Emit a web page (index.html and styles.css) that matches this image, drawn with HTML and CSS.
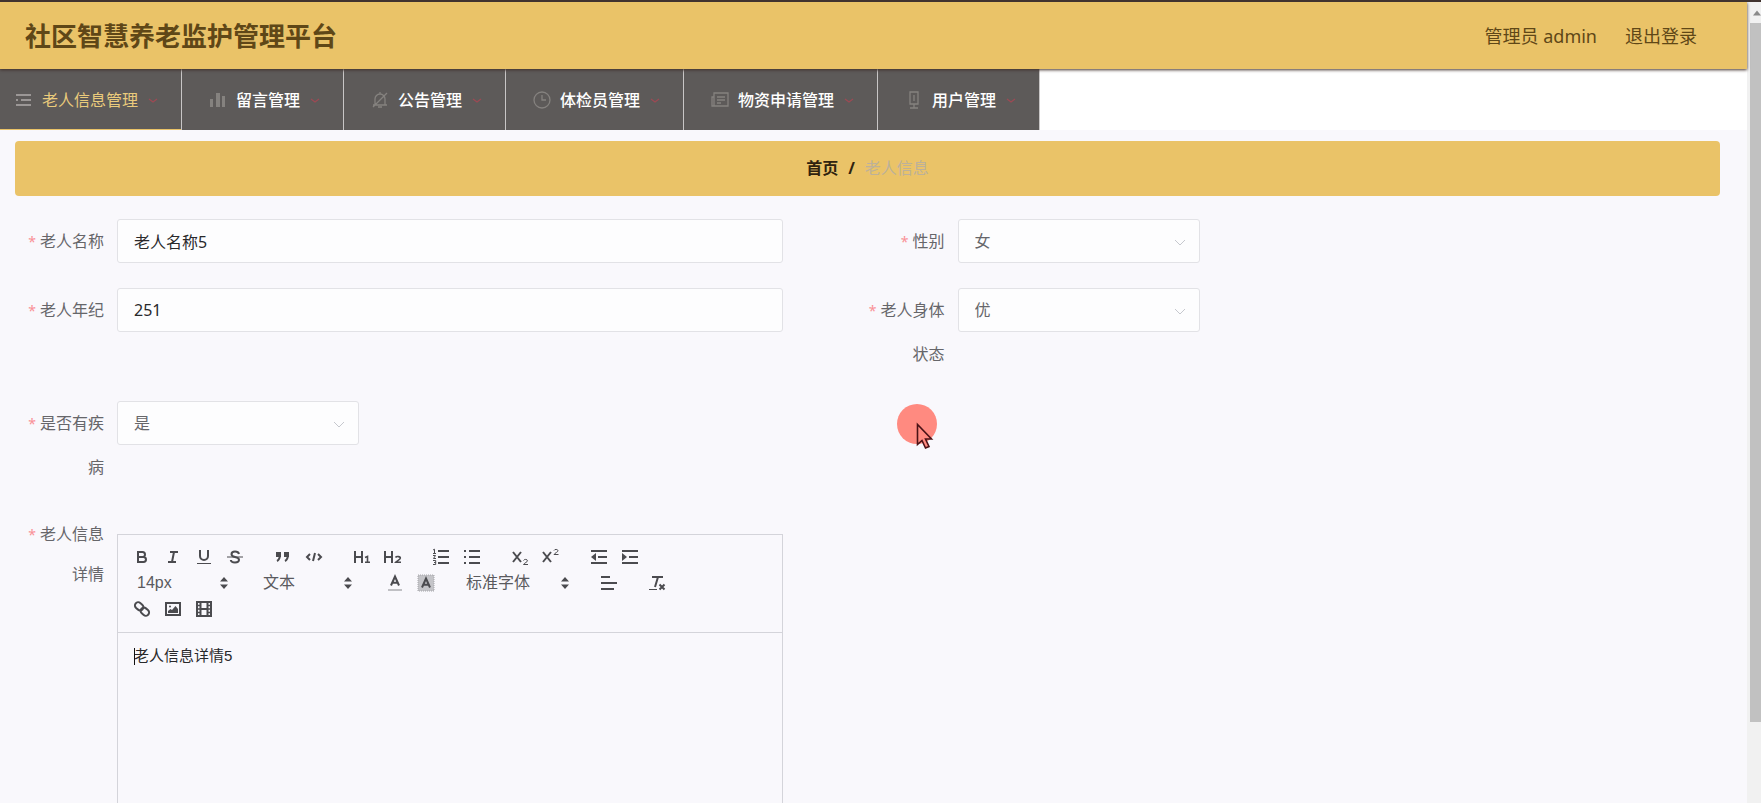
FILE: index.html
```html
<!DOCTYPE html>
<html lang="zh-CN">
<head>
<meta charset="utf-8">
<title>社区智慧养老监护管理平台</title>
<link rel="stylesheet" href="styles.css">
</head>
<body>
<div class="app">
  <div class="page">
    <header class="header">
      <h1 class="brand">社区智慧养老监护管理平台</h1>
      <div class="account">
        <span>管理员 admin</span>
        <a href="#logout">退出登录</a>
      </div>
    </header>

    <nav class="nav">
      <button class="nav-item active" type="button">
        <svg class="nav-icon" viewBox="0 0 18 18"><path d="M1 4h15M6 9h10M1 14h15M1 9h2"/></svg>
        <span>老人信息管理</span>
        <svg class="caret" viewBox="0 0 10 10"><path d="M1 4l4 3 4-3"/></svg>
      </button>
      <button class="nav-item" type="button">
        <svg class="nav-icon solid" viewBox="0 0 18 18"><path d="M1 8h3v8H1zM7 2h4v14H7zM13 5h3v11h-3z"/></svg>
        <span>留言管理</span>
        <svg class="caret" viewBox="0 0 10 10"><path d="M1 4l4 3 4-3"/></svg>
      </button>
      <button class="nav-item" type="button">
        <svg class="nav-icon" viewBox="0 0 18 18"><path d="M2 14h14M4 14V8a5 5 0 0 1 10 0v6M9 3V1M7 16h4M2 16L16 2"/></svg>
        <span>公告管理</span>
        <svg class="caret" viewBox="0 0 10 10"><path d="M1 4l4 3 4-3"/></svg>
      </button>
      <button class="nav-item" type="button">
        <svg class="nav-icon" viewBox="0 0 18 18"><circle cx="9" cy="9" r="8"/><path d="M9 4v5h4"/></svg>
        <span>体检员管理</span>
        <svg class="caret" viewBox="0 0 10 10"><path d="M1 4l4 3 4-3"/></svg>
      </button>
      <button class="nav-item" type="button">
        <svg class="nav-icon" viewBox="0 0 18 18"><path d="M3 2h14v13H1V6h2zM3 6v9M6 6h8M6 9h8M6 12h4"/></svg>
        <span>物资申请管理</span>
        <svg class="caret" viewBox="0 0 10 10"><path d="M1 4l4 3 4-3"/></svg>
      </button>
      <button class="nav-item" type="button">
        <svg class="nav-icon" viewBox="0 0 18 18"><path d="M5 1h8v12H5zM9 4v6M9 13v4M5 17h8"/></svg>
        <span>用户管理</span>
        <svg class="caret" viewBox="0 0 10 10"><path d="M1 4l4 3 4-3"/></svg>
      </button>
    </nav>

    <main class="content">
      <div class="breadcrumb">
        <a href="#home">首页</a><span class="slash">/</span><span class="here">老人信息</span>
      </div>

      <form class="form">
        <div class="field">
          <label for="name"><i>*</i>老人名称</label>
          <input class="control" id="name" type="text" value="老人名称5">
        </div>
        <div class="field">
          <label for="sex"><i>*</i>性别</label>
          <div class="select">
            <select class="control" id="sex"><option>女</option><option>男</option></select>
            <svg class="arrow" viewBox="0 0 14 14"><path d="M2 5l5 5 5-5"/></svg>
          </div>
        </div>
        <div class="field">
          <label for="age"><i>*</i>老人年纪</label>
          <input class="control" id="age" type="text" value="251">
        </div>
        <div class="field">
          <label for="health"><i>*</i>老人身体状态</label>
          <div class="select">
            <select class="control" id="health"><option>优</option><option>良</option></select>
            <svg class="arrow" viewBox="0 0 14 14"><path d="M2 5l5 5 5-5"/></svg>
          </div>
        </div>
        <div class="field wide">
          <label for="ill"><i>*</i>是否有疾病</label>
          <div class="select">
            <select class="control" id="ill"><option>是</option><option>否</option></select>
            <svg class="arrow" viewBox="0 0 14 14"><path d="M2 5l5 5 5-5"/></svg>
          </div>
        </div>
        <div class="field detail">
          <label for="detail"><i>*</i>老人信息详情</label>
          <div class="editor">
            <div class="toolbar">
              <div class="group">
                <button type="button" aria-label="加粗"><svg viewBox="0 0 18 18"><path d="M5 4h4.500a2.500 2.500 0 0 1 0 5H5zM5 9h5.500a2.500 2.500 0 0 1 0 5H5z"/></svg></button>
                <button type="button" aria-label="斜体"><svg viewBox="0 0 18 18"><path d="M6 4h8M4 14h8M8 14l2-10"/></svg></button>
                <button type="button" aria-label="下划线"><svg viewBox="0 0 18 18"><path d="M5 2v6a4 4 0 0 0 8 0V2"/><path class="thin" d="M2 15.500h14"/></svg></button>
                <button type="button" aria-label="删除线"><svg viewBox="0 0 18 18"><path class="thin" d="M1 9h16"/><path d="M13 6c-.5-2-2-2.500-4-2.500S5.500 4.500 5.500 6.200C5.500 8 7 8.500 9 9s4 1 4 2.800S11.500 14.500 9 14.500 5 13.800 4.800 12"/></svg></button>
              </div>
              <div class="group">
                <button type="button" aria-label="引用"><svg viewBox="0 0 18 18"><path class="fill" d="M2 4h5v5H2zM10 4h5v5h-5z"/><path d="M6 6c0 4-1 6-3 7M14 6c0 4-1 6-3 7"/></svg></button>
                <button type="button" aria-label="代码"><svg viewBox="0 0 18 18"><path d="M5 6L2 9l3 3M13 6l3 3-3 3M10 5l-2 8"/></svg></button>
              </div>
              <div class="group">
                <button type="button" aria-label="一级标题"><svg viewBox="0 0 18 18"><path d="M2 3v12M9 3v12M2 9h7"/><path class="mid" d="M12 9.500L14.500 8.500v6M12 14.300h5"/></svg></button>
                <button type="button" aria-label="二级标题"><svg viewBox="0 0 18 18"><path d="M1 3v12M8 3v12M1 9h7"/><path class="mid" d="M11.500 9.500c1-1.500 5-1.200 4.800.8-.1 1.500-3.300 2.200-4.600 4H17"/></svg></button>
              </div>
              <div class="group">
                <button type="button" aria-label="有序列表"><svg viewBox="0 0 18 18"><path d="M6 3h11M6 9h11M6 15h11"/><path class="thin" d="M1 2l1.500-.8V5M1 5.500h3M1 7.500h2.500L1.500 10.500H4M1 12.500h2.700v4H1M2 14.500h1.700"/></svg></button>
                <button type="button" aria-label="无序列表"><svg viewBox="0 0 18 18"><path d="M6 3h11M6 9h11M6 15h11M1 3h2M1 9h2M1 15h2"/></svg></button>
              </div>
              <div class="group">
                <button type="button" aria-label="下标"><svg viewBox="0 0 18 18"><path d="M2 4l8 10M10 4L2 14"/><path class="thin" d="M12.500 12.500c.5-1.500 4-1.500 4 .3 0 1.200-3 2-4 3.700h4.500"/></svg></button>
                <button type="button" aria-label="上标"><svg viewBox="0 0 18 18"><path d="M1 4l8 10M9 4L1 14"/><path class="thin" d="M12 2.500c.5-1.500 4-1.500 4 .3 0 1.200-3 2-4 3.700h4.500"/></svg></button>
              </div>
              <div class="group">
                <button type="button" aria-label="减少缩进"><svg viewBox="0 0 18 18"><path d="M1 3h16M1 15h16M8 9h9"/><path class="fill" d="M6 5v8L1 9z"/></svg></button>
                <button type="button" aria-label="增加缩进"><svg viewBox="0 0 18 18"><path d="M1 3h16M1 15h16M8 9h9"/><path class="fill" d="M1 5v8l5-4z"/></svg></button>
              </div>
              <div class="group picker size">
                <select aria-label="字号"><option>14px</option></select>
                <svg viewBox="0 0 18 18"><path class="fill" d="M5 7.500L9 3l4 4.500zM5 10.500L9 15l4-4.500z"/></svg>
              </div>
              <div class="group picker block">
                <select aria-label="段落"><option>文本</option></select>
                <svg viewBox="0 0 18 18"><path class="fill" d="M5 7.500L9 3l4 4.500zM5 10.500L9 15l4-4.500z"/></svg>
              </div>
              <div class="group">
                <button type="button" aria-label="文字颜色"><svg viewBox="0 0 18 18"><path d="M5 11.500L9 2.500l4 9M6.500 8.800h5"/><path class="pale" d="M2 16h14"/></svg></button>
                <button type="button" aria-label="背景颜色"><svg viewBox="0 0 18 18"><path class="shade" d="M1 1h16v16H1z"/><path d="M5 13.500L9 4.500l4 9M6.500 10.800h5"/></svg></button>
              </div>
              <div class="group picker font">
                <select aria-label="字体"><option>标准字体</option></select>
                <svg viewBox="0 0 18 18"><path class="fill" d="M5 7.500L9 3l4 4.500zM5 10.500L9 15l4-4.500z"/></svg>
              </div>
              <div class="group">
                <button type="button" aria-label="对齐"><svg viewBox="0 0 18 18"><path d="M1 3h9M1 9h16M1 15h13"/></svg></button>
              </div>
              <div class="group">
                <button type="button" aria-label="清除格式"><svg viewBox="0 0 18 18"><path d="M4 3h11M10 3L7 13M11.500 10.500l5 5M16.500 10.500l-5 5"/><path class="thin" d="M1 15.500h8"/></svg></button>
              </div>
              <div class="group">
                <button type="button" aria-label="链接"><svg viewBox="0 0 18 18"><rect x="1.500" y="3" width="9" height="6.500" rx="3.200" transform="rotate(40 6 6.500)"/><rect x="7.500" y="8.500" width="9" height="6.500" rx="3.200" transform="rotate(40 12 11.500)"/></svg></button>
                <button type="button" aria-label="图片"><svg viewBox="0 0 18 18"><path d="M2 3h14v12H2z"/><path class="fill" d="M4 13v-2l2.500-2L8 10l3.500-4L14 9v4z"/><circle class="fill" cx="6" cy="6.500" r="1"/></svg></button>
                <button type="button" aria-label="视频"><svg viewBox="0 0 18 18"><path d="M2 2h14v14H2zM5.500 2v14M12.500 2v14M5.500 9h7"/><path class="mid" d="M2 5.500h3M2 9h3M2 12.500h3M13 5.500h3M13 9h3M13 12.500h3"/></svg></button>
              </div>
            </div>
            <textarea class="editing" id="detail">老人信息详情5</textarea>
            <span class="text-caret"></span>
          </div>
        </div>
      </form>
    </main>
  </div>
  <div class="scrollbar">
    <svg viewBox="0 0 11 18"><path d="M3 12l4-5 4 5z"/></svg>
    <div class="thumb"></div>
  </div>
</div>
<svg class="pointer" viewBox="0 0 40 50"><circle cx="20" cy="20" r="20" fill="#ff8a80"/><path d="M20.500 20.500v20l4.500-4 3.500 7.500 3.500-1.500-3.500-7.500h6z" fill="#ff8a80" stroke="#4a1216" stroke-width="1.600"/></svg>
</body>
</html>
```
FILE: styles.css
```css
* {
  box-sizing: border-box;
}

body {
  margin: 0;
  background: #f9f8fc;
  color: #66666a;
  font: 16px/24px "Noto Sans", "Noto Sans CJK SC", sans-serif;
}

a {
  color: inherit;
  text-decoration: none;
}

button, input, select, textarea {
  margin: 0;
  font: inherit;
}

svg {
  display: block;
  flex: none;
}

.app {
  display: flex;
  height: 100vh;
  overflow: hidden;
  border-top: 2px solid #40332f;
}

.page {
  flex: 1;
  min-width: 0;
}

.header {
  position: relative;
  display: flex;
  align-items: center;
  justify-content: space-between;
  height: 67px;
  padding: 0 50px 0 25px;
  background: #eac368;
  box-shadow: 0 1px 3px #40302c;
}

.brand {
  margin: 0;
  color: #5f4717;
  font-size: 26px;
  font-weight: 700;
  line-height: 40px;
}

.account {
  display: flex;
  gap: 28px;
  color: #5f4717;
  font-size: 18px;
}

.nav {
  display: flex;
  height: 61px;
  background: #fff;
}

.nav-item {
  display: flex;
  align-items: center;
  padding: 0 23px 0 27px;
  border: 0;
  border-right: 1px solid #c8c6c6;
  background: #5d5a59;
  color: #fff;
  font-weight: 500;
  white-space: nowrap;
}

.nav-item.active {
  padding-left: 15px;
  color: #eacb7c;
  font-weight: 400;
  box-shadow: inset 0 -1px #eac368;
}

.nav-icon {
  width: 18px;
  height: 18px;
  margin-right: 9px;
  fill: none;
  stroke: #85827f;
  stroke-width: 1.3;
}

.active .nav-icon {
  stroke: #9b9796;
  stroke-width: 2;
}

.nav-icon.solid {
  fill: #85827f;
  stroke: none;
}

.caret {
  width: 10px;
  height: 10px;
  margin-left: 10px;
  fill: none;
  stroke: #9c4a54;
  stroke-width: 1.3;
}

.content {
  padding: 11px 27px 0 15px;
}

.breadcrumb {
  display: flex;
  align-items: center;
  justify-content: center;
  height: 55px;
  padding-bottom: 2px;
  border-radius: 4px;
  background: #eac368;
}

.breadcrumb a,
.slash {
  color: #30230f;
  font-weight: 700;
}

.slash {
  margin: 0 10px;
}

.here {
  color: #bcb19a;
}

.form {
  display: grid;
  grid-template-columns: 1fr 1fr;
  row-gap: 25px;
  padding: 23px 12px 0;
}

.field {
  display: flex;
  align-items: flex-start;
  padding-right: 10%;
}

.field.wide {
  grid-column: 1 / -1;
}

.field label {
  flex: none;
  width: 90px;
  padding-right: 13px;
  line-height: 44px;
  text-align: right;
}

.field i {
  margin-right: 4px;
  color: #f99096;
  font-size: 14px;
  font-style: normal;
  line-height: 1;
}

.control {
  width: 100%;
  height: 44px;
  padding: 0 16px;
  border: 1px solid #e2e2e6;
  border-radius: 3px;
  outline: 0;
  background: #fdfdfe;
  color: #29292b;
}

.select {
  position: relative;
  width: 242px;
}

.select .control {
  appearance: none;
  color: #66666a;
}

.arrow {
  position: absolute;
  right: 13px;
  top: 16px;
  width: 14px;
  height: 14px;
  fill: none;
  stroke: #c6c8ce;
  pointer-events: none;
}

.detail label {
  line-height: 40px;
}

.editor {
  position: relative;
  flex: 1;
  min-width: 0;
  margin-top: 20px;
  border: 1px solid #d4d4da;
}

.toolbar {
  display: flex;
  flex-wrap: wrap;
  padding: 9px 8px 10px;
  border-bottom: 1px solid #d4d4da;
}

.group {
  display: flex;
  height: 26px;
  margin-right: 17px;
}

.toolbar button {
  display: flex;
  align-items: center;
  justify-content: center;
  width: 31px;
  padding: 0;
  border: 0;
  background: none;
}

.toolbar svg {
  width: 18px;
  height: 18px;
  fill: none;
  stroke: #4b4b4f;
  stroke-width: 2;
}

.toolbar .fill {
  fill: #4b4b4f;
  stroke: none;
}

.toolbar .thin {
  stroke-width: 1;
}

.toolbar .mid {
  stroke-width: 1.6;
}

.toolbar .pale {
  stroke: #c0c0c4;
}

.toolbar .shade {
  fill: #c4c4c8;
  stroke: #a6a6aa;
  stroke-width: 1;
  stroke-dasharray: 1 1;
}

.picker {
  position: relative;
  align-items: center;
}

.picker select {
  width: 100%;
  height: 24px;
  padding: 0 0 2px 8px;
  border: 0;
  background: none;
  appearance: none;
  color: #5a5a5e;
  font-family: "Liberation Sans", "Noto Sans CJK SC", sans-serif;
}

.picker svg {
  position: absolute;
  right: 5px;
  pointer-events: none;
}

.size {
  width: 112px;
}

.size select {
  padding-left: 11px;
}

.block {
  width: 107px;
}

.font {
  width: 118px;
}

.picker.font svg {
  right: 2px;
}

.editing {
  display: block;
  width: 100%;
  height: 340px;
  padding: 12px 16px;
  border: 0;
  outline: 0;
  resize: none;
  background: none;
  color: #29292b;
  font: 15px/22px "Liberation Sans", "Noto Sans CJK SC", sans-serif;
}

.text-caret {
  position: absolute;
  left: 16px;
  top: 113px;
  width: 1px;
  height: 17px;
  background: #111;
}

.scrollbar {
  display: flex;
  flex-direction: column;
  width: 14px;
  padding-left: 3px;
  background: #f1f1f1;
}

.scrollbar svg {
  height: 21px;
  fill: #8a8a8a;
}

.thumb {
  height: 87.3%;
  background: #c1c1c1;
}

.pointer {
  position: absolute;
  left: 897px;
  top: 404px;
  width: 40px;
  height: 50px;
  pointer-events: none;
}
```
